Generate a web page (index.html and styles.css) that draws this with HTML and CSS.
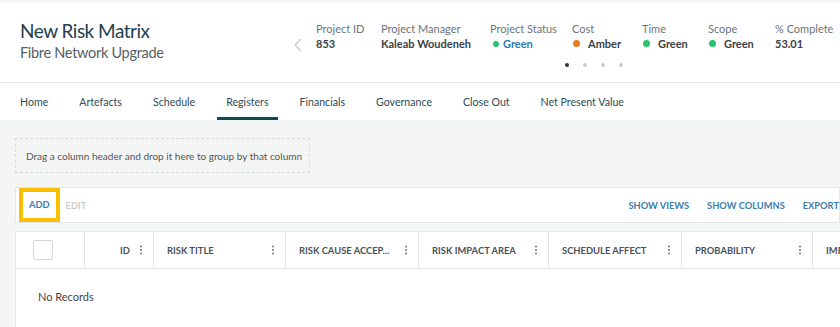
FILE: index.html
```html
<!DOCTYPE html>
<html>
<head>
    <meta charset="UTF-8">
    <title>New Risk Matrix</title>
    <link rel="stylesheet" href="styles.css">
</head>
<body>
    <div class="page">
        <div class="project-header">
            <div class="project-title">
                <h1>New Risk Matrix</h1>
                <div class="project-subtitle">Fibre Network Upgrade</div>
            </div>
            <div class="project-meta">
                <div class="meta-row">
                    <span class="chevron">
                        <svg width="8" height="14" viewBox="0 0 8 14"><path d="M7 1 L1 7 L7 13" fill="none" stroke="#c4c8cc" stroke-width="1.2"/></svg>
                    </span>
                    <div class="meta-item w-id">
                        <div class="meta-label">Project ID</div>
                        <div class="meta-value">853</div>
                    </div>
                    <div class="meta-item w-pm">
                        <div class="meta-label">Project Manager</div>
                        <div class="meta-value">Kaleab Woudeneh</div>
                    </div>
                    <div class="meta-item w-ps">
                        <div class="meta-label">Project Status</div>
                        <div class="meta-value link"><span class="dot green small"></span>Green</div>
                    </div>
                    <div class="meta-item w-cost">
                        <div class="meta-label">Cost</div>
                        <div class="meta-value"><span class="dot amber"></span>Amber</div>
                    </div>
                    <div class="meta-item w-time">
                        <div class="meta-label">Time</div>
                        <div class="meta-value"><span class="dot green"></span>Green</div>
                    </div>
                    <div class="meta-item w-scope">
                        <div class="meta-label">Scope</div>
                        <div class="meta-value"><span class="dot green"></span>Green</div>
                    </div>
                    <div class="meta-item">
                        <div class="meta-label">% Complete</div>
                        <div class="meta-value">53.01</div>
                    </div>
                </div>
                <div class="pager">
                    <span class="pager-dot active"></span>
                    <span class="pager-dot"></span>
                    <span class="pager-dot"></span>
                    <span class="pager-dot"></span>
                </div>
            </div>
        </div>

        <nav class="tabs">
            <a class="tab">Home</a>
            <a class="tab">Artefacts</a>
            <a class="tab">Schedule</a>
            <a class="tab active">Registers</a>
            <a class="tab">Financials</a>
            <a class="tab">Governance</a>
            <a class="tab">Close Out</a>
            <a class="tab">Net Present Value</a>
        </nav>

        <div class="content">
            <div class="group-panel">Drag a column header and drop it here to group by that column</div>

            <div class="toolbar">
                <div class="toolbar-left">
                    <span class="tool-btn add">ADD</span>
                    <span class="tool-btn disabled">EDIT</span>
                </div>
                <div class="toolbar-right">
                    <span class="tool-btn">SHOW VIEWS</span>
                    <span class="tool-btn">SHOW COLUMNS</span>
                    <span class="tool-btn">EXPORT</span>
                </div>
            </div>

            <div class="grid">
                <div class="grid-head">
                    <div class="col col-check"><span class="checkbox"></span></div>
                    <div class="col col-id"><span>ID</span><span class="kebab"></span></div>
                    <div class="col w132"><span>RISK TITLE</span><span class="kebab"></span></div>
                    <div class="col w133"><span>RISK CAUSE ACCEP...</span><span class="kebab"></span></div>
                    <div class="col w130"><span>RISK IMPACT AREA</span><span class="kebab"></span></div>
                    <div class="col w133"><span>SCHEDULE AFFECT</span><span class="kebab"></span></div>
                    <div class="col w131"><span>PROBABILITY</span><span class="kebab"></span></div>
                    <div class="col w132"><span>IMPACT</span><span class="kebab"></span></div>
                </div>
                <div class="grid-body">No Records</div>
            </div>
        </div>
    </div>
</body>
</html>
```

FILE: styles.css
```css
body {
    margin: 0;
    padding: 0;
    font-family: 'Lato', 'Open Sans', sans-serif;
    background-color: #f4f5f5;
    color: #333;
    overflow: hidden;
}
.page {
    width: 840px;
    padding-top: 3px;
}

/* 顶部项目信息 */
.project-header {
    background: #fff;
    height: 79px;
    border-bottom: 1px solid #e4e6e7;
    display: flex;
    justify-content: space-between;
}
.project-title {
    padding: 16px 0 0 20px;
}
h1 {
    margin: 0;
    font-size: 19px;
    letter-spacing: -0.5px;
    font-weight: 400;
    color: #22404e;
    line-height: 24px;
}
.project-subtitle {
    font-size: 14.5px;
    letter-spacing: -0.3px;
    color: #555e64;
    line-height: 19px;
}
.project-meta {
    padding-top: 18px;
    width: 546px;
}
.meta-row {
    display: flex;
    align-items: flex-start;
}
.chevron {
    width: 22px;
    padding: 15px 0 0 0;
}
.meta-item {
    font-size: 11px;
    line-height: 15px;
    white-space: nowrap;
}
.w-id { width: 65px; }
.w-pm { width: 109px; }
.w-ps { width: 82px; }
.w-cost { width: 70px; }
.w-time { width: 66px; }
.w-scope { width: 67px; }
.meta-label {
    color: #6b747b;
}
.meta-value {
    color: #3b4247;
    font-weight: 700;
    display: flex;
    align-items: center;
}
.meta-value.link {
    color: #2f78ad;
}
.dot {
    width: 7px;
    height: 7px;
    border-radius: 50%;
    margin: 0 8px 0 1px;
    display: inline-block;
}
.dot.small {
    width: 6px;
    height: 6px;
    margin: 0 4px 0 3px;
}
.dot.green { background: #27c46b; }
.dot.amber { background: #ea7b1f; }
.pager {
    display: flex;
    gap: 14px;
    padding: 8px 0 0 271px;
}
.pager-dot {
    width: 4px;
    height: 4px;
    border-radius: 50%;
    background: #c9cccf;
}
.pager-dot.active {
    background: #333;
}

/* 标签页 */
.tabs {
    background: #fff;
    height: 37px;
    display: flex;
    padding-left: 20px;
    gap: 31px;
}
.tab {
    font-size: 10.6px;
    color: #2d4b58;
    line-height: 34px;
    padding-top: 2px;
    height: 32px;
    border-bottom: 3px solid transparent;
}
.tab.active {
    border-bottom-color: #0d4c4e;
    padding: 2px 9px 0;
    margin: 0 -9px;
}

/* 内容区 */
.content {
    padding: 18px 0 0 15px;
}
.group-panel {
    width: 283px;
    height: 33px;
    border: 1px dashed #d7dadc;
    font-size: 10px;
    color: #555;
    line-height: 34px;
    padding-left: 10px;
    margin-bottom: 14px;
    white-space: nowrap;
}
.toolbar {
    width: 823px;
    height: 34px;
    background: #fff;
    border: 1px solid #e4e6e7;
    display: flex;
    justify-content: space-between;
    align-items: center;
    margin-bottom: 8px;
}
.toolbar-left, .toolbar-right {
    display: flex;
    align-items: center;
}
.toolbar-right {
    gap: 18px;
}
.tool-btn {
    font-size: 9.3px;
    font-weight: 700;
    color: #3c7db3;
    white-space: nowrap;
}
.tool-btn.add {
    margin-left: 3px;
    border: 4px solid #fbbf00;
    padding: 5px 6px 5px 6px;
    line-height: 16px;
}
.tool-btn.disabled {
    color: #c8cbcd;
    margin-left: 6px;
}

/* 表格 */
.grid {
    width: 960px;
    background: #fff;
    border: 1px solid #e4e6e7;
    border-bottom: none;
    height: 100px;
}
.grid-head {
    display: flex;
    height: 36px;
    border-bottom: 1px solid #e4e6e7;
}
.col {
    flex-shrink: 0;
    display: flex;
    align-items: center;
    justify-content: space-between;
    border-right: 1px solid #e4e6e7;
    font-size: 9.4px;
    font-weight: 700;
    color: #4a5156;
    padding: 0 11px 0 13px;
    box-sizing: border-box;
    white-space: nowrap;
}
.col-check { width: 69px; justify-content: flex-start; padding-left: 17px; }
.col-id { width: 69px; justify-content: flex-end; gap: 10px; }
.w130 { width: 130px; }
.w131 { width: 131px; }
.w132 { width: 132px; }
.w133 { width: 133px; }
.checkbox {
    width: 18px;
    height: 18px;
    border: 1px solid #d5d8da;
    border-radius: 2px;
}
.kebab {
    width: 2px;
    height: 2px;
    border-radius: 50%;
    background: #6f767b;
    box-shadow: 0 -3.5px 0 #6f767b, 0 3.5px 0 #6f767b;
}
.grid-body {
    font-size: 11px;
    color: #444;
    padding: 21px 0 0 22px;
}
```
